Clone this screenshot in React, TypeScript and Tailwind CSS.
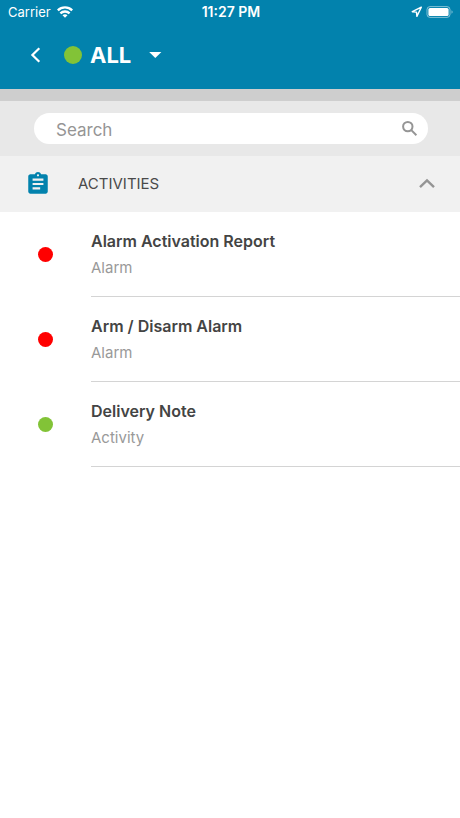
import { MdAssignment } from "react-icons/md";

type Item = {
  title: string;
  kind: string;
  color: string;
};

const items: Item[] = [
  { title: "Alarm Activation Report", kind: "Alarm", color: "bg-[#ff0000]" },
  { title: "Arm / Disarm Alarm", kind: "Alarm", color: "bg-[#ff0000]" },
  { title: "Delivery Note", kind: "Activity", color: "bg-[#82c337]" },
];

function StatusBar() {
  return (
    <div className="grid h-6 grid-cols-3 items-center pl-2 pr-1.5 text-[13px] leading-6">
      <div className="flex items-center gap-1.5">
        <span>Carrier</span>
        <svg className="h-3 w-4" viewBox="0 0 16 12" fill="none" stroke="currentColor" strokeWidth="2.4">
          <path d="M0.8 4.4C4.8 0.4 11.2 0.4 15.2 4.4" />
          <path d="M3.4 7.3C6 4.8 10 4.8 12.6 7.3" />
          <path d="M8 11.8L5.5 9.3C6.9 8 9.1 8 10.5 9.3Z" fill="currentColor" stroke="none" />
        </svg>
      </div>
      <span className="text-center text-sm font-semibold leading-6">11:27 PM</span>
      <div className="flex items-center justify-end gap-1">
        <svg className="h-3 w-3" viewBox="0 0 12 12" fill="none" stroke="currentColor" strokeWidth="1.4" strokeLinejoin="round">
          <path d="M11.3 1.2L2.3 5.7L6.5 6.1L6.9 10.4Z" />
        </svg>
        <svg className="h-3 w-7" viewBox="0 0 28 12">
          <rect x="1" y="0.6" width="23" height="10.8" rx="3" fill="none" stroke="currentColor" strokeOpacity="0.5" />
          <rect x="2.4" y="2" width="20.2" height="8" rx="1.6" fill="currentColor" />
          <path d="M25.5 4.2C27 4.8 27 7.2 25.5 7.8Z" fill="currentColor" fillOpacity="0.5" />
        </svg>
      </div>
    </div>
  );
}

function Header() {
  return (
    <header className="bg-[#0282ad] text-white">
      <StatusBar />
      <div className="flex h-[65px] items-center pb-1 pl-7">
        <button aria-label="Back" className="flex h-10 w-9 items-center">
          <svg className="h-4 w-4" viewBox="0 0 16 16" fill="none" stroke="currentColor" strokeWidth="2.2">
            <path d="M11.3 1.3L4.4 8L11.3 14.7" />
          </svg>
        </button>
        <button className="flex items-center">
          <span className="h-[18px] w-[18px] rounded-full bg-[#82c337]" />
          <span className="ml-2 text-[22px] font-bold leading-7">ALL</span>
          <svg className="ml-4 h-2 w-4" viewBox="0 0 16 8" fill="currentColor">
            <path d="M2.2 1H14.4L8.3 7Z" />
          </svg>
        </button>
      </div>
    </header>
  );
}

function SearchBar() {
  return (
    <div className="border-t-12 border-[#cecece] bg-[#e8e8e8] px-8 py-3">
      <label className="ml-0.5 flex h-[31px] items-center rounded-full bg-white pl-[22px] pr-2">
        <input
          type="text"
          aria-label="Search"
          placeholder="Search"
          className="min-w-0 flex-1 pt-0.5 text-[17px] leading-6 text-[#4a4a4a] outline-none placeholder:text-[#959595]"
        />
        <svg className="h-5 w-5" viewBox="0 0 20 20" fill="none" stroke="#959595" strokeWidth="2">
          <circle cx="7.8" cy="7.6" r="4.7" />
          <path d="M11.3 11.1L16.4 16.2" />
        </svg>
      </label>
    </div>
  );
}

function Row({ item }: { item: Item }) {
  return (
    <li className="flex items-center">
      <span className="flex w-[91px] justify-center">
        <span className={`h-[15px] w-[15px] rounded-full ${item.color}`} />
      </span>
      <div className="flex-1 border-b border-[#d4d4d4] pb-3.5 pt-4">
        <p className="text-base font-semibold leading-[26px] text-[#444444]">{item.title}</p>
        <p className="text-[15px] leading-7 text-[#999999]">{item.kind}</p>
      </div>
    </li>
  );
}

export default function App() {
  return (
    <div className="min-h-screen bg-white font-['Inter',sans-serif]">
      <Header />
      <SearchBar />
      <main>
        <button className="flex h-14 w-full items-center bg-[#f1f1f1] pl-[25px] pr-6 text-left">
          <MdAssignment className="h-[26px] w-[26px] text-[#0282ad]" />
          <span className="ml-[27px] flex-1 text-[15px] text-[#4a4a4a]">ACTIVITIES</span>
          <svg className="h-4 w-[18px]" viewBox="0 0 18 16" fill="none" stroke="#959595" strokeWidth="2.4">
            <path d="M2 11.2L9 4.4L16 11.2" />
          </svg>
        </button>
        <ul>
          {items.map((item) => (
            <Row key={item.title} item={item} />
          ))}
        </ul>
      </main>
    </div>
  );
}
